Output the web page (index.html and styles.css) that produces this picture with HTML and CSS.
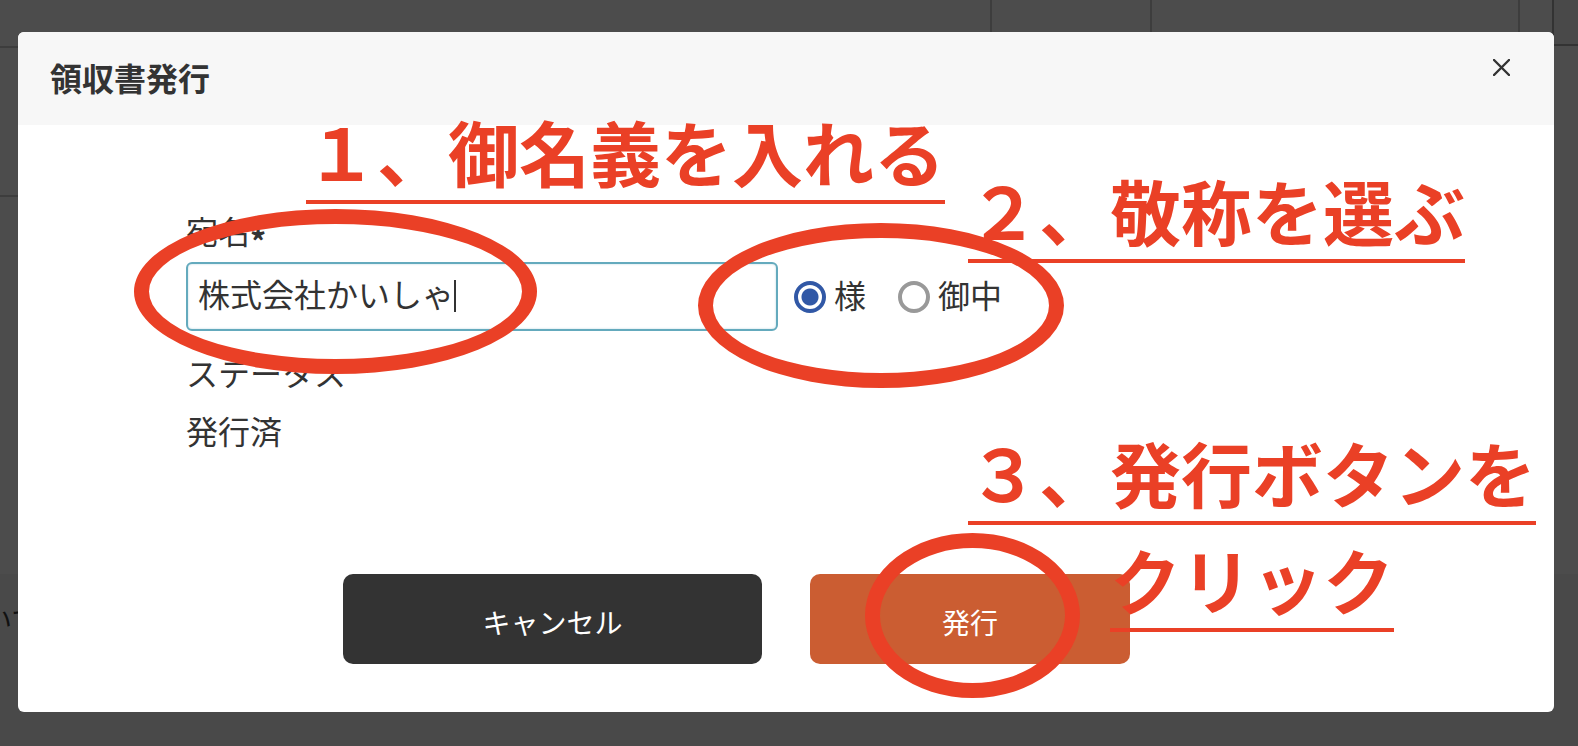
FILE: index.html
```html
<!DOCTYPE html>
<html lang="ja">
<head>
    <meta charset="UTF-8">
    <meta name="viewport" content="width=device-width, initial-scale=1.0">
    <title>領収書発行</title>
    <link rel="stylesheet" href="styles.css">
</head>
<body>
    <!-- dimmed page behind the dialog -->
    <div class="page" aria-hidden="true">
        <div class="list">
            <div class="list-head">
                <div class="cell cell-main"></div>
                <div class="cell cell-date"></div>
                <div class="cell cell-detail"></div>
            </div>
            <div class="list-row"></div>
            <div class="list-space"></div>
            <div class="list-foot"><span class="cut-text">いて</span></div>
        </div>
        <div class="side"><div class="side-head"></div></div>
    </div>

    <div class="modal" role="dialog" aria-labelledby="modal-title">
        <div class="modal-header">
            <h1 id="modal-title">領収書発行</h1>
            <button type="button" class="close" aria-label="閉じる">
                <svg width="17" height="17" viewBox="0 0 17 17">
                    <path d="M1 1L16 16M16 1L1 16" stroke="#333" stroke-width="2.4" stroke-linecap="round"/>
                </svg>
            </button>
        </div>
        <form class="modal-body">
            <label class="field-label" for="name">宛名<b class="required">*</b></label>
            <div class="name-row">
                <div class="name-box">
                    <input type="text" id="name" value="株式会社かいしゃ">
                    <span class="caret"></span>
                </div>
                <label class="choice"><input type="radio" name="title" checked><span>様</span></label>
                <label class="choice"><input type="radio" name="title"><span>御中</span></label>
            </div>
            <div class="status-label">ステータス</div>
            <div class="status-value">発行済</div>
            <div class="buttons">
                <button type="button" class="cancel">キャンセル</button>
                <button type="submit" class="issue">発行</button>
            </div>
        </form>
    </div>

    <!-- instructions drawn over the dialog -->
    <div class="circle circle-name"></div>
    <div class="circle circle-title"></div>
    <div class="circle circle-issue"></div>
    <p class="note note-name"><span>１、御名義を入れる</span></p>
    <p class="note note-title"><span>２、敬称を選ぶ</span></p>
    <p class="note note-issue"><span>３、発行ボタンを</span><span class="second">クリック</span></p>
</body>
</html>
```

FILE: styles.css
```css
* {
    box-sizing: border-box;
}

body {
    margin: 0;
    min-height: 100vh;
    padding: 32px 24px 34px 18px;
    position: relative;
    overflow: hidden;
    background-color: #4c4c4c;
    color: #333;
    font-family: "Noto Sans CJK JP", sans-serif;
    font-size: 32px;
    line-height: 42px;
}

.page {
    position: absolute;
    inset: 0;
    display: flex;
}

.list {
    flex: 1;
    display: flex;
    flex-direction: column;
}

.list-head {
    display: flex;
    height: 48px;
    border-bottom: 2px solid #3d3d3d;
}

.cell {
    border-right: 2px solid #3d3d3d;
}

.cell-main {
    flex: 1;
}

.cell-date {
    width: 160px;
}

.cell-detail {
    width: 368px;
    margin-right: 32px;
}

.list-row {
    height: 149px;
    border-bottom: 2px solid #3d3d3d;
}

.list-space {
    height: 377px;
}

.list-foot {
    flex: 1;
    padding-top: 24px;
    background-color: #494949;
    overflow: hidden;
}

.cut-text {
    display: block;
    margin-left: -16px;
    color: #111;
    font-size: 28px;
}

.side {
    width: 26px;
    background: linear-gradient(#4c4c4c 574px, #494949 574px);
}

.side-head {
    height: 46px;
    background-color: #494949;
    border-left: 2px solid #333;
    border-bottom: 2px solid #333;
}

.modal {
    position: relative;
    background-color: #fff;
    border-radius: 6px;
    overflow: hidden;
}

.modal-header {
    display: flex;
    justify-content: space-between;
    align-items: flex-start;
    padding: 24px 41px 27px 32px;
    background-color: #f7f7f7;
}

.modal-header h1 {
    margin: 0;
    font-size: 32px;
    font-weight: bold;
}

button {
    border: none;
    padding: 0;
    font-family: inherit;
    cursor: pointer;
}

.close {
    display: flex;
    padding: 3px;
    background: none;
}

.modal-body {
    padding: 84px 168px 48px;
}

.field-label {
    display: block;
    margin-bottom: 11px;
}

.required {
    line-height: 0;
    vertical-align: -10px;
}

.name-row {
    display: flex;
    align-items: center;
    margin-bottom: 20px;
}

.name-box {
    position: relative;
    flex: 0 1 592px;
    margin-right: 16px;
}

.name-box input {
    display: block;
    width: 100%;
    height: 69px;
    padding: 0 10px 8px;
    border: 2px solid #64aabd;
    border-radius: 6px;
    outline: none;
    box-shadow: inset 0 0 2px rgba(100, 170, 189, 0.5);
    background-color: #fff;
    color: inherit;
    font: inherit;
}

.caret {
    position: absolute;
    left: 268px;
    top: 18px;
    width: 2px;
    height: 32px;
    background-color: #333;
}

.choice {
    display: flex;
    align-items: center;
    gap: 8px;
    margin-right: 32px;
}

.choice span {
    padding-bottom: 6px;
}

.choice input {
    appearance: none;
    width: 32px;
    height: 32px;
    margin: 0;
    border: 4px solid #999;
    border-radius: 50%;
}

.choice input:checked {
    border-color: #3158a6;
    background: radial-gradient(circle, #3158a6 8px, #fff 9px);
}

.status-label {
    margin-bottom: 16px;
}

.buttons {
    display: flex;
    gap: 48px;
    margin-top: 123px;
    padding-left: 157px;
}

.buttons button {
    height: 90px;
    padding-top: 5px;
    border-radius: 10px;
    color: #fff;
    font-size: 28px;
}

.buttons .cancel {
    flex: 0 1 419px;
    background-color: #333;
}

.buttons .issue {
    flex: 0 1 320px;
    background-color: #cb5d32;
}

.circle {
    position: absolute;
    height: 165px;
    border: 15px solid #ea4026;
    border-radius: 50%;
    pointer-events: none;
}

.circle-name {
    left: 134px;
    top: 209px;
    width: 403px;
}

.circle-title {
    left: 698px;
    top: 223px;
    width: 366px;
}

.circle-issue {
    left: 865px;
    top: 533px;
    width: 215px;
}

.note {
    position: absolute;
    margin: 0;
    display: flex;
    flex-direction: column;
    align-items: flex-start;
    gap: 13px;
    color: #ea4026;
    font-size: 71px;
    font-weight: bold;
    line-height: 80px;
    white-space: nowrap;
    pointer-events: none;
}

.note span {
    padding-bottom: 10px;
    border-bottom: 4px solid #ea4026;
}

.note-name {
    left: 306px;
    top: 110px;
}

.note-title {
    left: 968px;
    top: 169px;
}

.note-issue {
    left: 968px;
    top: 431px;
}

.note .second {
    margin-left: 142px;
}
```
